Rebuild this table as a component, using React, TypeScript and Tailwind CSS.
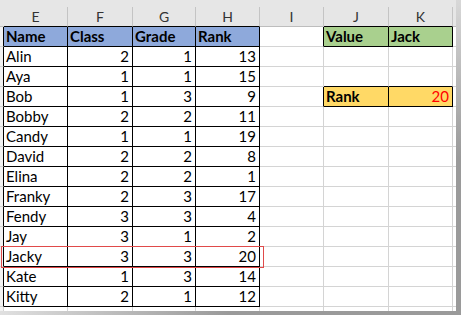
import React from "react";

const G = "#d4d4d4";

type Col = { key: string; w: string };
const cols: Col[] = [
  { key: "E", w: "w-[64px]" },
  { key: "F", w: "w-[65px]" },
  { key: "G", w: "w-[63px]" },
  { key: "H", w: "w-[64px]" },
  { key: "I", w: "w-[64px]" },
  { key: "J", w: "w-[65px]" },
  { key: "K", w: "w-[64px]" },
];

const data: [string, number, number, number][] = [
  ["Alin", 2, 1, 13],
  ["Aya", 1, 1, 15],
  ["Bob", 1, 3, 9],
  ["Bobby", 2, 2, 11],
  ["Candy", 1, 1, 19],
  ["David", 2, 2, 8],
  ["Elina", 2, 2, 1],
  ["Franky", 2, 3, 17],
  ["Fendy", 3, 3, 4],
  ["Jay", 3, 1, 2],
  ["Jacky", 3, 3, 20],
  ["Kate", 1, 3, 14],
  ["Kitty", 2, 1, 12],
];

type CellDef = {
  text?: string;
  bg?: string;
  bold?: boolean;
  right?: boolean;
  red?: boolean;
  rb?: boolean;
  bb?: boolean;
};

function buildRows(): CellDef[][] {
  const rows: CellDef[][] = [];
  // row 1: headers
  rows.push([
    { text: "Name", bg: "blue", bold: true, rb: true, bb: true },
    { text: "Class", bg: "blue", bold: true, rb: true, bb: true },
    { text: "Grade", bg: "blue", bold: true, rb: true, bb: true },
    { text: "Rank", bg: "blue", bold: true, rb: true, bb: true },
    { rb: true },
    { text: "Value", bg: "green", bold: true, rb: true, bb: true },
    { text: "Jack", bg: "green", bold: true, rb: true, bb: true },
  ]);
  data.forEach((d, i) => {
    const r: CellDef[] = [
      { text: d[0], rb: true, bb: true },
      { text: String(d[1]), right: true, rb: true, bb: true },
      { text: String(d[2]), right: true, rb: true, bb: true },
      { text: String(d[3]), right: true, rb: true, bb: true },
      {},
      {},
      {},
    ];
    if (i === 1) {
      r[5] = { bb: true };
      r[6] = { bb: true };
    }
    if (i === 2) {
      r[4] = { rb: true };
      r[5] = { text: "Rank", bg: "yellow", bold: true, rb: true, bb: true };
      r[6] = { text: "20", bg: "yellow", right: true, red: true, rb: true, bb: true };
    }
    rows.push(r);
  });
  return rows;
}

function Cell({ c, w }: { c: CellDef; w: string }) {
  const bgc =
    c.bg === "blue"
      ? "bg-[#8ea9db]"
      : c.bg === "green"
      ? "bg-[#a9d08e]"
      : c.bg === "yellow"
      ? "bg-[#ffd966]"
      : "bg-white";
  return (
    <div
      className={[
        w,
        "h-[20px] shrink-0 border-r border-b flex items-end pb-[1px] overflow-hidden whitespace-nowrap",
        c.rb ? "border-r-black" : "border-r-[#d4d4d4]",
        c.bb ? "border-b-black" : "border-b-[#d4d4d4]",
        bgc,
        c.right ? "justify-end pr-[3px]" : "justify-start pl-[2px]",
        c.bold ? "font-bold" : "font-normal",
        c.red ? "text-[#ff0000]" : "text-black",
      ].join(" ")}
    >
      <span className="leading-[17px]">{c.text ?? ""}</span>
    </div>
  );
}

export default function App() {
  const rows = buildRows();
  return (
    <div
      className="w-[461px] h-[315px] bg-white overflow-hidden relative text-[15px]"
      style={{ fontFamily: "Lato, 'Liberation Sans', sans-serif" }}
    >
      <div className="flex">
        <div className="flex flex-col w-[456px]">
          {/* column header */}
          <div className="h-[7px] bg-[#e6e6e6]" />
          <div className="flex h-[20px] bg-[#e6e6e6]">
            <div className="w-[4px] h-[20px] shrink-0 border-b border-b-[#bdbdbd]" />
            {cols.map((col, idx) => (
              <div
                key={col.key}
                className={[
                  col.w,
                  "h-[20px] shrink-0 border-r border-r-[#c4c4c4] border-b flex items-center justify-center text-[14px] text-[#333] leading-none",
                  idx === 4 ? "border-b-[#bdbdbd]" : "border-b-black",
                ].join(" ")}
              >
                {col.key}
              </div>
            ))}
            <div className="w-[3px] h-[20px] shrink-0 border-b border-b-[#bdbdbd]" />
          </div>
          {rows.map((r, ri) => (
            <div key={ri} className="flex h-[20px]">
              <div className="w-[4px] h-[20px] shrink-0 bg-[#f2f2f2] border-r border-r-black border-b border-b-[#d4d4d4]" />
              {r.map((c, ci) => (
                <Cell key={ci} c={c} w={cols[ci].w} />
              ))}
              <div className="w-[3px] h-[20px] shrink-0 border-b border-b-[#d4d4d4]" />
            </div>
          ))}
          {/* partial row */}
          <div className="flex h-[4px]">
            <div className="w-[4px] h-[4px] shrink-0 bg-[#f2f2f2] border-r border-r-[#d4d4d4]" />
            {cols.map((col) => (
              <div key={col.key} className={col.w + " h-[4px] shrink-0 border-r border-r-[#d4d4d4]"} />
            ))}
          </div>
          <div className="h-[4px] bg-gradient-to-r from-[#e0e0e0] via-[#9a9a9a] to-[#9a9a9a] [background-size:100%_100%]" />
        </div>
        <div className="w-[5px] h-[315px] bg-gradient-to-b from-[#d8d8d8] via-[#9a9a9a] to-[#9a9a9a]" />
      </div>
      {/* red annotation box */}
      <div className="absolute left-[1px] top-[246px] w-[263px] h-[22px] border border-[#e04a4a]" />
    </div>
  );
}
